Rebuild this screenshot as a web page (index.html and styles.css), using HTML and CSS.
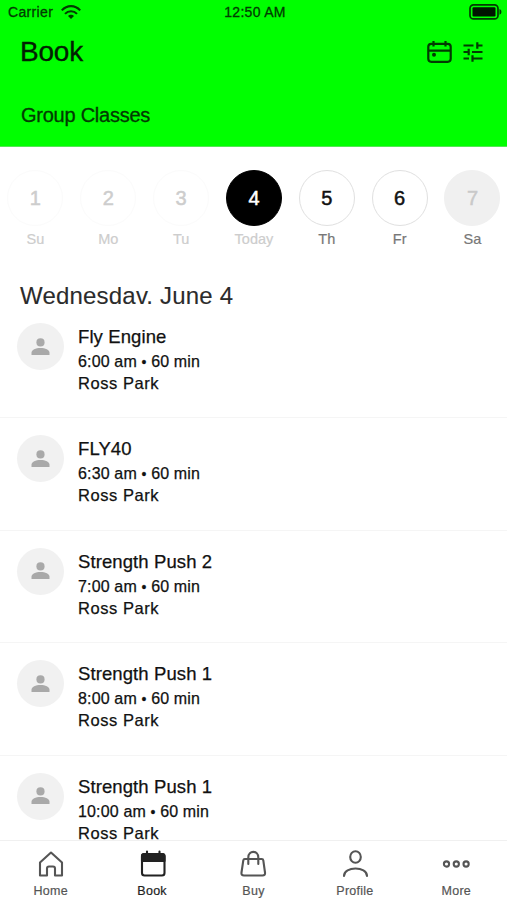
FILE: index.html
```html
<!DOCTYPE html>
<html lang="en">
<head>
<meta charset="utf-8">
<title>Book</title>
<link rel="stylesheet" href="styles.css">
</head>
<body>
<svg class="defs" aria-hidden="true"><symbol id="person" viewBox="0 0 24 24"><circle cx="11.500" cy="7.4" r="4.1"/><path d="M2.500 20v-2.200C2.500 14.700 6.700 13 11.500 13s9 1.700 9 4.800V20z"/></symbol></svg>
<div class="app">
  <header class="header">
    <div class="status">
      <div class="carrier"><span>Carrier</span>
        <svg width="20" height="15" viewBox="0 0 20 15" fill="none" stroke="currentColor" stroke-width="2.1"><path d="M.8 5.4C6-.3 14-.3 19.2 5.4M4 8.9c3.3-3.6 8.700-3.600 12 0"/><path d="M10 14l-3-3c1.500-1.700 4.500-1.700 6 0z" fill="currentColor" stroke="none"/></svg>
      </div>
      <span class="clock">12:50 AM</span>
      <svg class="battery" width="33" height="16" viewBox="0 0 33 16"><rect x="1" y=".9" width="28" height="14" rx="3.500" fill="none" stroke="currentColor" stroke-width="1.700"/><rect x="3.500" y="3.300" width="23" height="9.200" rx="1.200" fill="#001500"/><path d="M30.500 5q2 .7 2 2.900T30.500 10.800z" fill="currentColor"/></svg>
    </div>
    <div class="titlebar">
      <h1>Book</h1>
      <div class="actions">
        <svg width="25" height="22" viewBox="0 0 25 22" fill="none" stroke="currentColor" stroke-width="2.200"><rect x="1.300" y="2.800" width="22.400" height="18" rx="3"/><path d="M1.300 9.700h22.400M6.500 0v5.500M18.500 0v5.500"/><circle cx="7" cy="13.700" r="2" fill="currentColor" stroke="none"/></svg>
        <svg width="20" height="20" viewBox="0 0 20 20" fill="none" stroke="currentColor" stroke-width="2.200"><path d="M.5 3.500h10M14 3.500h5.500M14.300 .3v6.400M.5 10h5M5.700 6.800v6.400M9 10h10.500M.5 16.500H6M9.500 13.300v6.400M9.500 16.500h10"/></svg>
      </div>
    </div>
    <div class="tab">Group Classes</div>
  </header>
  <section class="days">
    <div class="day past"><b>1</b><span>Su</span></div>
    <div class="day past"><b>2</b><span>Mo</span></div>
    <div class="day past"><b>3</b><span>Tu</span></div>
    <div class="day today"><b>4</b><span>Today</span></div>
    <div class="day"><b>5</b><span>Th</span></div>
    <div class="day"><b>6</b><span>Fr</span></div>
    <div class="day off"><b>7</b><span>Sa</span></div>
  </section>
  <main class="schedule">
    <h2>Wednesdav. June 4</h2>
    <article class="class"><div class="avatar"><svg><use href="#person"/></svg></div><div><h3>Fly Engine</h3><p class="time">6:00 am <i>•</i> 60 min</p><p class="place">Ross Park</p></div></article>
    <article class="class"><div class="avatar"><svg><use href="#person"/></svg></div><div><h3>FLY40</h3><p class="time">6:30 am <i>•</i> 60 min</p><p class="place">Ross Park</p></div></article>
    <article class="class"><div class="avatar"><svg><use href="#person"/></svg></div><div><h3>Strength Push 2</h3><p class="time">7:00 am <i>•</i> 60 min</p><p class="place">Ross Park</p></div></article>
    <article class="class"><div class="avatar"><svg><use href="#person"/></svg></div><div><h3>Strength Push 1</h3><p class="time">8:00 am <i>•</i> 60 min</p><p class="place">Ross Park</p></div></article>
    <article class="class"><div class="avatar"><svg><use href="#person"/></svg></div><div><h3>Strength Push 1</h3><p class="time">10:00 am <i>•</i> 60 min</p><p class="place">Ross Park</p></div></article>
  </main>
  <nav class="nav">
    <a><svg viewBox="0 0 28 28"><path d="M3 12.500L14 2.500l11 10v13h-7v-7q0-2-2-2h-4q-2 0-2 2v7H3z"/></svg><span>Home</span></a>
    <a class="active"><svg viewBox="0 0 28 28"><rect x="4" y="4" width="22.500" height="21.500" rx="2.500"/><path d="M4 5.500q0-1.500 2-1.500h18.500q2 0 2 2V11H4z" fill="currentColor"/><path d="M9 1.500v4M21.500 1.500v4"/></svg><span>Book</span></a>
    <a><svg viewBox="0 0 28 28"><path d="M5.800 9h17q1.300 0 1.500 1.300l1.700 12.200q.4 3-2.500 3H5q-2.900 0-2.500-3L4.300 10.300Q4.500 9 5.800 9zM9.300 14V7.500c0-7.500 10-7.500 10 0V14"/></svg><span>Buy</span></a>
    <a><svg viewBox="0 0 28 28"><ellipse cx="14.500" cy="7" rx="5.300" ry="5.800"/><path d="M3 26c0-10 23-10 23 0"/></svg><span>Profile</span></a>
    <a><svg viewBox="0 0 28 28"><circle cx="4.500" cy="14" r="2.600"/><circle cx="14.300" cy="14" r="2.600"/><circle cx="24.100" cy="14" r="2.600"/></svg><span>More</span></a>
  </nav>
</div>
</body>
</html>
```
FILE: styles.css
```css
* { box-sizing: border-box; }
body { margin: 0; background: #fff; color: #111; font-family: "Liberation Sans", Arial, sans-serif; }
h1, h2, h3, p { margin: 0; font-weight: 400; }
svg { display: block; flex: none; }
.defs { position: absolute; width: 0; height: 0; }
.app { width: 507px; height: 900px; display: flex; flex-direction: column; overflow: hidden; }
.header { flex: none; height: 147px; background: #00ff00; color: #023a02; border-bottom: 1px solid #55e655; -webkit-text-stroke: .3px; }
.status { height: 24px; padding: 0 5px 0 8px; display: grid; grid-template-columns: 1fr auto 1fr; align-items: center; font-size: 14px; }
.carrier { display: flex; align-items: center; gap: 8px; letter-spacing: .35px; }
.clock { letter-spacing: .3px; }
.battery { justify-self: end; }
.titlebar { height: 55px; padding: 0 24px 0 20px; display: flex; align-items: center; justify-content: space-between; }
h1 { font-size: 28px; line-height: 32px; letter-spacing: -.2px; color: #022002; }
.actions { display: flex; align-items: center; gap: 11px; }
.tab { padding: 25px 21px 0; font-size: 20px; line-height: 23px; letter-spacing: -.25px; }
.days { flex: none; height: 125px; padding: 23px 0 0; margin-left: -1px; display: grid; grid-template-columns: repeat(7, 72.85px); justify-items: center; }
.day { width: 56px; display: flex; flex-direction: column; align-items: center; color: #777; }
.day b { width: 56px; height: 56px; border: 1px solid #e0e0e0; border-radius: 50%; display: grid; place-items: center; font-size: 20px; font-weight: 400; color: #111; -webkit-text-stroke: .5px; }
.day span { margin-top: 4px; font-size: 14.5px; line-height: 18px; -webkit-text-stroke: .2px; }
.day.past, .day.today { color: #cdcdcd; }
.past b { color: #cdcdcd; border-color: #fbfbfb; }
.today b { background: #000; border-color: #000; color: #fff; }
.off b { background: #f0f0f0; border-color: #f0f0f0; color: #c9c9c9; }
.schedule { flex: 1; min-height: 0; overflow: hidden; padding-top: 10px; }
h2 { height: 24px; padding-left: 20px; font-size: 24px; line-height: 27px; letter-spacing: .2px; color: #2b2b2b; -webkit-text-stroke: .1px; }
.class { height: 112.4px; padding: 17px 17px 0; display: flex; gap: 14px; border-bottom: 1px solid #f5f5f5; -webkit-text-stroke: .25px; }
.avatar { width: 47px; height: 47px; border-radius: 50%; background: #f1f1f1; display: grid; place-items: center; }
.avatar svg { width: 24px; height: 24px; fill: #a9a9a9; }
h3 { padding-top: 2px; font-size: 18.5px; line-height: 23px; letter-spacing: .1px; }
.time { padding-top: 3px; font-size: 16px; line-height: 22px; letter-spacing: .15px; }
.time i { font-style: normal; font-size: 14px; line-height: 1; }
.place { font-size: 16.5px; line-height: 20px; letter-spacing: .55px; }
.nav { flex: none; height: 60px; border-top: 1px solid #f0f0f0; background: #fff; display: grid; grid-template-columns: repeat(5, 1fr); color: #555; }
.nav a { display: flex; flex-direction: column; align-items: center; padding-top: 9px; }
.nav svg { width: 28px; height: 28px; fill: none; stroke: currentColor; stroke-width: 2.1; stroke-linejoin: round; stroke-linecap: round; }
.nav span { margin-top: 5px; font-size: 12.5px; line-height: 16px; letter-spacing: .25px; -webkit-text-stroke: .2px; }
.nav .active { color: #222; }
```
